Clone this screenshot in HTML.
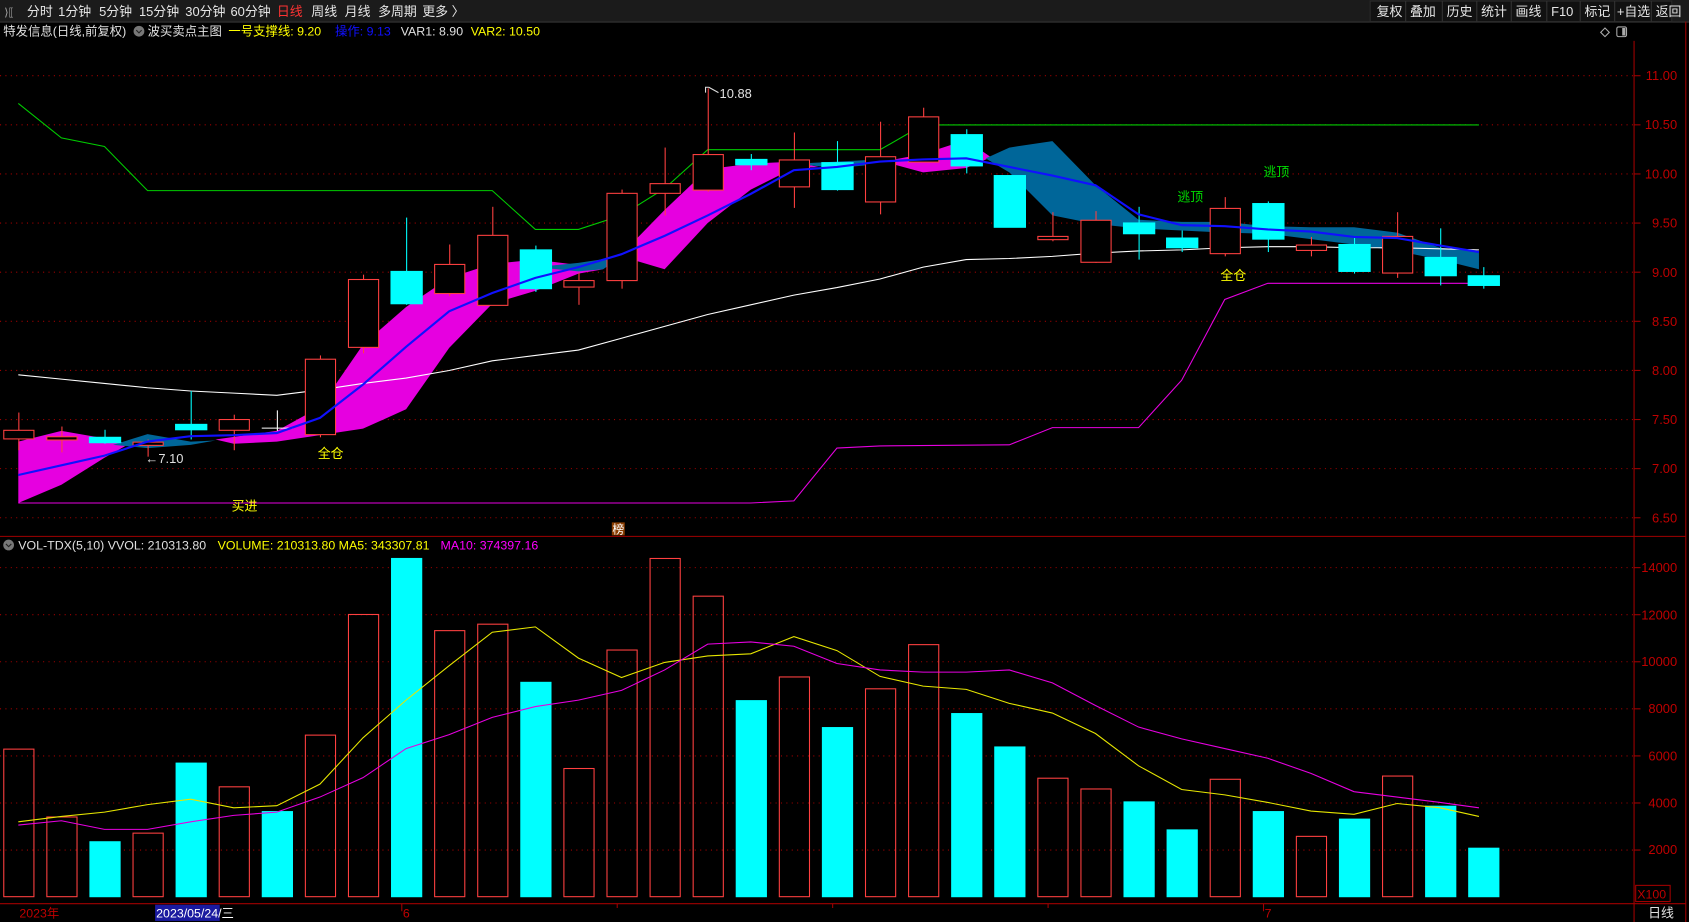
<!DOCTYPE html>
<html><head><meta charset="utf-8"><style>
html,body{margin:0;padding:0;background:#000;overflow:hidden}
svg{display:block}
text{font-family:"Liberation Sans","Noto Sans CJK SC",sans-serif}
</style></head><body>
<svg width="1689" height="922" viewBox="0 0 1568 856" preserveAspectRatio="none" xmlns="http://www.w3.org/2000/svg">
<rect width="1568" height="856" fill="#000"/>
<rect x="0" y="0" width="1568" height="20" fill="#1b1b1b"/>
<line x1="0" y1="20.5" x2="1568" y2="20.5" stroke="#333"/>
<g font-size="12" fill="#e6e6e6">
<text x="4" y="15" fill="#aaa" font-size="10">⟩⟦</text>
<text x="25" y="15">分时</text><text x="54" y="15">1分钟</text><text x="92" y="15">5分钟</text>
<text x="129" y="15">15分钟</text><text x="172" y="15">30分钟</text><text x="214" y="15">60分钟</text>
<text x="257" y="15" fill="#ff3333">日线</text><text x="289" y="15">周线</text><text x="320" y="15">月线</text>
<text x="351" y="15">多周期</text><text x="392" y="15">更多 〉</text>
</g>
<g fill="#111" stroke="#2a2a2a"><rect x="1272" y="1" width="280" height="19"/></g>
<g font-size="12" fill="#e6e6e6">
<text x="1278" y="15">复权</text><text x="1309" y="15">叠加</text><text x="1343" y="15">历史</text>
<text x="1375" y="15">统计</text><text x="1407" y="15">画线</text><text x="1440" y="15">F10</text>
<text x="1471" y="15">标记</text><text x="1501" y="15">+自选</text><text x="1537" y="15">返回</text>
</g>
<g stroke="#333"><line x1="1305" y1="1" x2="1305" y2="20"/><line x1="1339" y1="1" x2="1339" y2="20"/><line x1="1371" y1="1" x2="1371" y2="20"/><line x1="1403" y1="1" x2="1403" y2="20"/><line x1="1436" y1="1" x2="1436" y2="20"/><line x1="1467" y1="1" x2="1467" y2="20"/><line x1="1499" y1="1" x2="1499" y2="20"/><line x1="1533" y1="1" x2="1533" y2="20"/></g>
<g font-size="11.5">
<text x="3" y="33" fill="#e0e0e0">特发信息(日线,前复权)</text>
<circle cx="129" cy="29" r="5" fill="#777"/><path d="M126.5 28l2.5 2.5 2.5-2.5" stroke="#222" fill="none"/>
<text x="137" y="33" fill="#e0e0e0">波买卖点主图</text>
<text x="212" y="33" fill="#ffff00">一号支撑线: 9.20</text>
<text x="311" y="33" fill="#1010ff">操作: 9.13</text>
<text x="372" y="33" fill="#e0e0e0">VAR1: 8.90</text>
<text x="437" y="33" fill="#ffff00">VAR2: 10.50</text>
</g>
<path d="M1490 26l4 4-4 4-4-4z" stroke="#aaa" fill="none"/>
<rect x="1501" y="25" width="9" height="9" rx="1.5" stroke="#aaa" fill="none"/><rect x="1506" y="26" width="3" height="7" fill="#aaa"/>
<g stroke="#a00000">
<line x1="1517" y1="38" x2="1517" y2="856"/>
<line x1="1565" y1="20" x2="1565" y2="856"/>
<line x1="0" y1="498" x2="1565" y2="498"/>
<line x1="0" y1="839" x2="1565" y2="839"/>
</g>
<g stroke="#a00000" stroke-dasharray="1 4">
<line x1="0" y1="70.3" x2="1517" y2="70.3"/><line x1="0" y1="115.9" x2="1517" y2="115.9"/>
<line x1="0" y1="161.5" x2="1517" y2="161.5"/><line x1="0" y1="207.1" x2="1517" y2="207.1"/>
<line x1="0" y1="252.7" x2="1517" y2="252.7"/><line x1="0" y1="298.3" x2="1517" y2="298.3"/>
<line x1="0" y1="343.9" x2="1517" y2="343.9"/><line x1="0" y1="389.5" x2="1517" y2="389.5"/>
<line x1="0" y1="435.1" x2="1517" y2="435.1"/><line x1="0" y1="480.7" x2="1517" y2="480.7"/>
<line x1="0" y1="527" x2="1517" y2="527"/><line x1="0" y1="570.7" x2="1517" y2="570.7"/>
<line x1="0" y1="614.4" x2="1517" y2="614.4"/><line x1="0" y1="658.1" x2="1517" y2="658.1"/>
<line x1="0" y1="701.8" x2="1517" y2="701.8"/><line x1="0" y1="745.5" x2="1517" y2="745.5"/>
<line x1="0" y1="789.2" x2="1517" y2="789.2"/>
</g>
<g stroke="#a00000">
<line x1="1517" y1="70.3" x2="1523" y2="70.3"/><line x1="1517" y1="115.9" x2="1523" y2="115.9"/><line x1="1517" y1="161.5" x2="1523" y2="161.5"/><line x1="1517" y1="207.1" x2="1523" y2="207.1"/><line x1="1517" y1="252.7" x2="1523" y2="252.7"/><line x1="1517" y1="298.3" x2="1523" y2="298.3"/><line x1="1517" y1="343.9" x2="1523" y2="343.9"/><line x1="1517" y1="389.5" x2="1523" y2="389.5"/><line x1="1517" y1="435.1" x2="1523" y2="435.1"/><line x1="1517" y1="480.7" x2="1523" y2="480.7"/>
<line x1="1517" y1="527" x2="1523" y2="527"/><line x1="1517" y1="570.7" x2="1523" y2="570.7"/><line x1="1517" y1="614.4" x2="1523" y2="614.4"/><line x1="1517" y1="658.1" x2="1523" y2="658.1"/><line x1="1517" y1="701.8" x2="1523" y2="701.8"/><line x1="1517" y1="745.5" x2="1523" y2="745.5"/><line x1="1517" y1="789.2" x2="1523" y2="789.2"/>
</g>
<g font-size="12" fill="#c00000" text-anchor="end">
<text x="1557" y="74.5">11.00</text><text x="1557" y="120">10.50</text><text x="1557" y="165.5">10.00</text>
<text x="1557" y="211">9.50</text><text x="1557" y="257">9.00</text><text x="1557" y="302.5">8.50</text>
<text x="1557" y="348">8.00</text><text x="1557" y="393.5">7.50</text><text x="1557" y="439">7.00</text>
<text x="1557" y="485">6.50</text>
<text x="1557" y="531">14000</text><text x="1557" y="575">12000</text><text x="1557" y="618.5">10000</text>
<text x="1557" y="662">8000</text><text x="1557" y="706">6000</text><text x="1557" y="749.5">4000</text>
<text x="1557" y="793">2000</text>
</g>
<rect x="1518.5" y="822" width="32" height="15" fill="none" stroke="#a00000"/>
<text x="1520" y="834" font-size="11.5" fill="#c00000">X100</text>

<g fill="#e600e0">
<polygon points="17,410 57,400 97,407 120,412 97,425 57,450 17,467"/>
<polygon points="200,408 257,400 297,378 337,320 377,285 417,258 457,245 497,241 537,246 560,250 537,254 497,270 457,282 417,323 377,380 337,398 297,404 257,410 217,412"/>
<polygon points="577,236 617,195 657,157 697,152 737,150 760,155 737,156 697,176 657,207 617,250 590,242"/>
<polygon points="820,150 857,143 897,130 920,146 897,156 857,160"/>
</g>
<g fill="#006699">
<polygon points="105,413 137,403 177,410 200,409 177,413 137,416"/>
<polygon points="497,248 537,244 577,238 560,250 537,252"/>
<polygon points="737,152 777,150 817,148 820,152 777,156"/>
<polygon points="915,147 937,137 977,131 1017,172 1057,204 1097,206 1137,206 1177,210 1217,211 1257,211 1297,216 1337,230 1373,233 1373,250 1337,241 1297,233 1257,227 1217,222 1177,217 1137,216 1097,214 1057,212 1017,208 977,200 937,160"/>
</g>
<polyline fill="none" stroke="#00cc00" points="17,96 57,128 97,136 137,177 457,177 497,213 537,213 577,200 617,175 657,139 817,139 857,116 1373,116"/>
<polyline fill="none" stroke="#ffffff" points="17,348 57,352 97,356 137,360 177,363 217,365 257,367 297,362 337,356 377,351 417,344 457,335 497,330 537,325 577,314 617,303 657,292 697,283 737,274 777,267 817,259 857,248 897,241 937,240 977,238 1017,235 1057,233 1097,232 1137,230 1177,229 1217,229 1257,230 1297,230 1337,231 1373,232"/>
<polyline fill="none" stroke="#e600e0" points="17,467 697,467 737,465 777,416 817,414 937,413 977,397 1057,397 1097,353 1137,278 1177,263 1373,263"/>
<g stroke="#ff4040" fill="#000" stroke-width="1">
<line x1="17.5" y1="383" x2="17.5" y2="418"/><rect x="3.5" y="399.5" width="28" height="8"/>
<line x1="57.5" y1="396" x2="57.5" y2="420"/><rect x="43.5" y="405.5" width="28" height="3"/>
<line x1="137.5" y1="408" x2="137.5" y2="424"/><rect x="123.5" y="410.5" width="28" height="3"/>
<line x1="217.5" y1="385" x2="217.5" y2="418"/><rect x="203.5" y="389.5" width="28" height="10"/>
<line x1="297.5" y1="330" x2="297.5" y2="406"/><rect x="283.5" y="333.5" width="28" height="70"/>
<line x1="337.5" y1="255" x2="337.5" y2="328"/><rect x="323.5" y="259.5" width="28" height="63"/>
<line x1="417.5" y1="227" x2="417.5" y2="275"/><rect x="403.5" y="245.5" width="28" height="27"/>
<line x1="457.5" y1="192" x2="457.5" y2="283"/><rect x="443.5" y="218.5" width="28" height="65"/>
<line x1="537.5" y1="253" x2="537.5" y2="283"/><rect x="523.5" y="260.5" width="28" height="6"/>
<line x1="577.5" y1="176" x2="577.5" y2="268"/><rect x="563.5" y="179.5" width="28" height="81"/>
<line x1="617.5" y1="137" x2="617.5" y2="200"/><rect x="603.5" y="170.5" width="28" height="9"/>
<line x1="657.5" y1="82" x2="657.5" y2="178"/><rect x="643.5" y="143.5" width="28" height="33"/>
<line x1="737.5" y1="123" x2="737.5" y2="193"/><rect x="723.5" y="148.5" width="28" height="25"/>
<line x1="817.5" y1="113" x2="817.5" y2="199"/><rect x="803.5" y="145.5" width="28" height="42"/>
<line x1="857.5" y1="100" x2="857.5" y2="150"/><rect x="843.5" y="108.5" width="28" height="42"/>
<line x1="977.5" y1="197" x2="977.5" y2="224"/><rect x="963.5" y="219.5" width="28" height="3"/>
<line x1="1017.5" y1="196" x2="1017.5" y2="244"/><rect x="1003.5" y="204.5" width="28" height="39"/>
<line x1="1137.5" y1="183" x2="1137.5" y2="238"/><rect x="1123.5" y="193.5" width="28" height="42"/>
<line x1="1217.5" y1="220" x2="1217.5" y2="238"/><rect x="1203.5" y="227.5" width="28" height="5"/>
<line x1="1297.5" y1="197" x2="1297.5" y2="258"/><rect x="1283.5" y="219.5" width="28" height="34"/>
</g>
<line x1="257.5" y1="381" x2="257.5" y2="400" stroke="#fff"/><line x1="243" y1="397.5" x2="272" y2="397.5" stroke="#fff"/>
<g stroke="#00ffff" fill="#00ffff">
<line x1="97.5" y1="399" x2="97.5" y2="412"/><rect x="83" y="406" width="29" height="5"/>
<line x1="177.5" y1="363" x2="177.5" y2="408"/><rect x="163" y="394" width="29" height="5"/>
<line x1="377.5" y1="202" x2="377.5" y2="283"/><rect x="363" y="252" width="29" height="30"/>
<line x1="497.5" y1="228" x2="497.5" y2="271"/><rect x="483" y="232" width="29" height="36"/>
<line x1="697.5" y1="143" x2="697.5" y2="158"/><rect x="683" y="148" width="29" height="5"/>
<line x1="777.5" y1="131" x2="777.5" y2="177"/><rect x="763" y="151" width="29" height="25"/>
<line x1="897.5" y1="120" x2="897.5" y2="161"/><rect x="883" y="125" width="29" height="29"/>
<rect x="923" y="163" width="29" height="48"/>
<line x1="1057.5" y1="192" x2="1057.5" y2="241"/><rect x="1043" y="207" width="29" height="10"/>
<line x1="1097.5" y1="214" x2="1097.5" y2="234"/><rect x="1083" y="221" width="29" height="9"/>
<line x1="1177.5" y1="187" x2="1177.5" y2="234"/><rect x="1163" y="189" width="29" height="33"/>
<line x1="1257.5" y1="220" x2="1257.5" y2="254"/><rect x="1243" y="227" width="29" height="25"/>
<line x1="1337.5" y1="212" x2="1337.5" y2="265"/><rect x="1323" y="239" width="29" height="17"/>
<line x1="1377.5" y1="248" x2="1377.5" y2="268"/><rect x="1363" y="256" width="29" height="9"/>
</g>
<polyline fill="none" stroke="#1010ff" stroke-width="2" points="17,441 57,432 97,423 137,410 177,405 217,404 257,402 297,388 337,357 377,322 417,289 457,272 497,258 537,248 577,236 617,219 657,200 697,180 737,158 777,155 817,150 857,148 897,147 937,155 977,163 1017,172 1057,199 1097,209 1137,210 1177,213 1217,215 1257,220 1297,221 1337,228 1373,234"/>
<g font-size="12">
<path d="M655 86 l0-5 l3 0 M658 81 l9 5" stroke="#ddd" fill="none"/>
<text x="668" y="91" fill="#e0e0e0">10.88</text>
<text x="135" y="430" fill="#e0e0e0">←7.10</text>
<text x="295" y="425" fill="#ffff00">全仓</text>
<text x="1133" y="260" fill="#ffff00">全仓</text>
<text x="215" y="474" fill="#ffff00">买进</text>
<text x="1093" y="187" fill="#00dd00">逃顶</text>
<text x="1173" y="164" fill="#00dd00">逃顶</text>
</g>
<rect x="568" y="485" width="12" height="12" fill="#8a3d00"/><text x="568.5" y="495.5" font-size="11" fill="#fff">榜</text>
<g font-size="11.5">
<circle cx="8" cy="506" r="5" fill="#777"/><path d="M5.5 505l2.5 2.5 2.5-2.5" stroke="#222" fill="none"/>
<text x="17" y="510" fill="#e0e0e0">VOL-TDX(5,10)  VVOL: 210313.80</text>
<text x="202" y="510" fill="#ffff00">VOLUME: 210313.80  MA5: 343307.81</text>
<text x="409" y="510" fill="#ff00ff">MA10: 374397.16</text>
</g>
<g stroke="#ff4040" fill="none">
<rect x="3.5" y="695.5" width="28" height="137"/>
<rect x="43.5" y="758.5" width="28" height="74"/>
<rect x="123.5" y="773.5" width="28" height="59"/>
<rect x="203.5" y="730.5" width="28" height="102"/>
<rect x="283.5" y="682.5" width="28" height="150"/>
<rect x="323.5" y="570.5" width="28" height="262"/>
<rect x="403.5" y="585.5" width="28" height="247"/>
<rect x="443.5" y="579.5" width="28" height="253"/>
<rect x="523.5" y="713.5" width="28" height="119"/>
<rect x="563.5" y="603.5" width="28" height="229"/>
<rect x="603.5" y="518.5" width="28" height="314"/>
<rect x="643.5" y="553.5" width="28" height="279"/>
<rect x="723.5" y="628.5" width="28" height="204"/>
<rect x="803.5" y="639.5" width="28" height="193"/>
<rect x="843.5" y="598.5" width="28" height="234"/>
<rect x="963.5" y="722.5" width="28" height="110"/>
<rect x="1003.5" y="732.5" width="28" height="100"/>
<rect x="1123.5" y="723.5" width="28" height="109"/>
<rect x="1203.5" y="776.5" width="28" height="56"/>
<rect x="1283.5" y="720.5" width="28" height="112"/>
</g>
<g fill="#00ffff">
<rect x="83" y="781" width="29" height="52"/>
<rect x="163" y="708" width="29" height="125"/>
<rect x="243" y="753" width="29" height="80"/>
<rect x="363" y="518" width="29" height="315"/>
<rect x="483" y="633" width="29" height="200"/>
<rect x="683" y="650" width="29" height="183"/>
<rect x="763" y="675" width="29" height="158"/>
<rect x="883" y="662" width="29" height="171"/>
<rect x="923" y="693" width="29" height="140"/>
<rect x="1043" y="744" width="29" height="89"/>
<rect x="1083" y="770" width="29" height="63"/>
<rect x="1163" y="753" width="29" height="80"/>
<rect x="1243" y="760" width="29" height="73"/>
<rect x="1323" y="748" width="29" height="85"/>
<rect x="1363" y="787" width="29" height="46"/>
</g>
<polyline fill="none" stroke="#e6e600" points="17,763 57,758 97,754 137,747 177,742 217,750 257,748 297,728 337,685 377,650 417,618 457,587 497,582 537,611 577,629 617,615 657,609 697,607 737,591 777,604 817,628 857,637 897,640 937,653 977,662 1017,681 1057,711 1097,733 1137,738 1177,745 1217,753 1257,756 1297,746 1337,750 1373,758"/>
<polyline fill="none" stroke="#e600e0" points="17,766 57,762 97,770 137,770 177,763 217,757 257,754 297,740 337,722 377,695 417,682 457,666 497,656 537,650 577,641 617,622 657,598 697,596 737,600 777,616 817,622 857,624 897,624 937,622 977,634 1017,655 1057,675 1097,686 1137,695 1177,704 1217,718 1257,735 1297,740 1337,745 1373,750"/>
<g stroke="#a00000"><line x1="373" y1="839" x2="373" y2="846"/><line x1="573" y1="839" x2="573" y2="843"/><line x1="773" y1="839" x2="773" y2="843"/><line x1="973" y1="839" x2="973" y2="843"/><line x1="1173" y1="839" x2="1173" y2="846"/></g>
<text x="18" y="852" font-size="11.5" fill="#c00000">2023年</text>
<rect x="144" y="840" width="60" height="15" fill="#1a1aa0"/>
<text x="145" y="852" font-size="11.5" fill="#fff">2023/05/24/三</text>
<text x="374" y="852" font-size="11.5" fill="#c00000">6</text>
<text x="1174" y="852" font-size="11.5" fill="#c00000">7</text>
<text x="1530" y="852" font-size="12" fill="#e0e0e0">日线</text>
</svg>
</body></html>
